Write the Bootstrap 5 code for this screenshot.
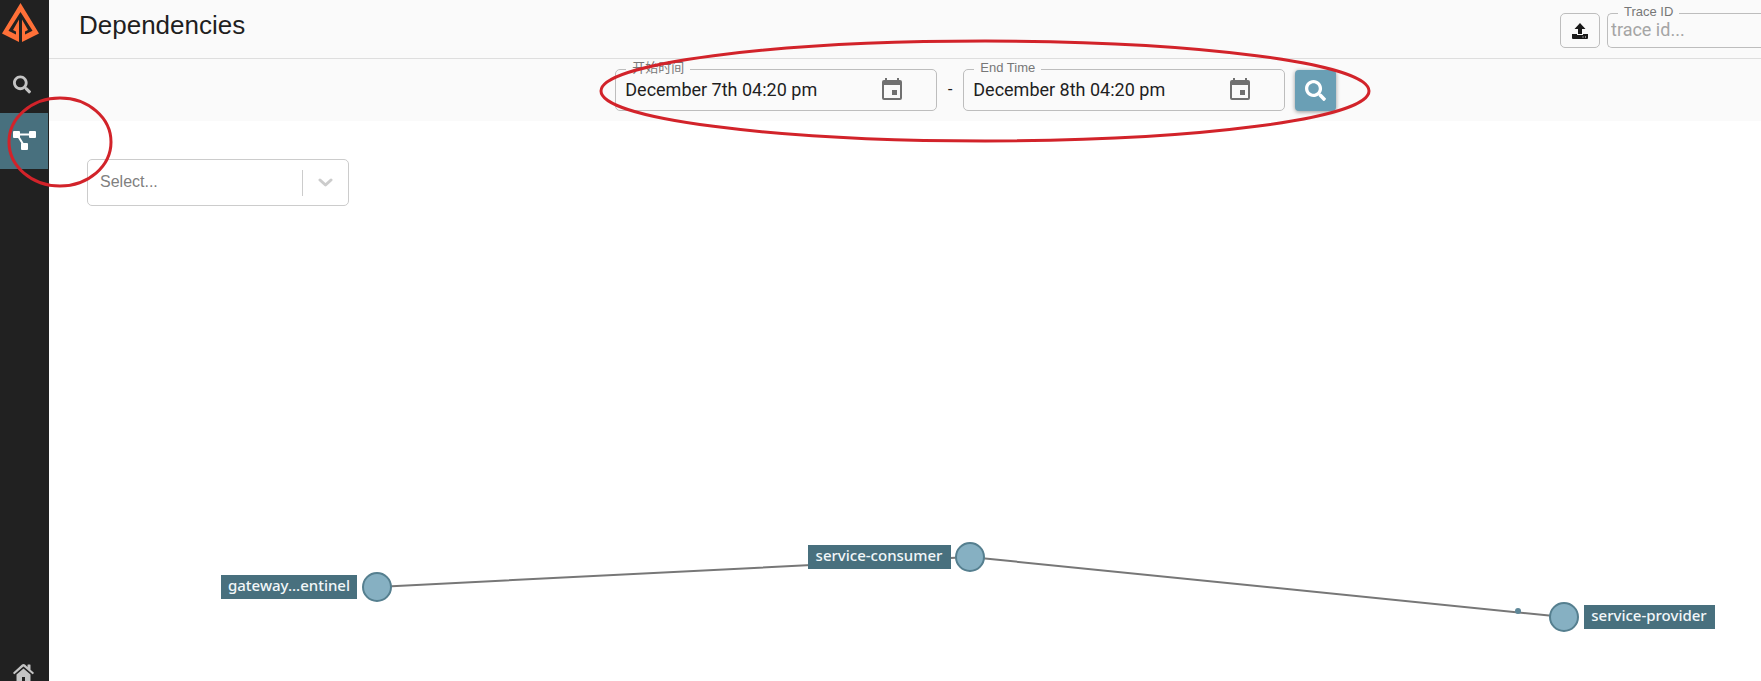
<!DOCTYPE html>
<html lang="en">
<head>
<meta charset="utf-8">
<meta name="viewport" content="width=device-width, initial-scale=1">
<title>Dependencies</title>
<link href="https://cdn.jsdelivr.net/npm/bootstrap@5.3.0/dist/css/bootstrap.min.css" rel="stylesheet">
<style>
  body { font-family: "Liberation Sans", "Noto Sans CJK SC", sans-serif; color: #1f1f1f; background: #fff; }
  .side-rail { width: 49px; background: #212121; }
  .side-rail a { color: #c4c4c4; height: 56px; }
  .side-rail .brand-link { height: 57px; padding: 3px 0 0 2px; }
  .side-rail .icon-link-row { padding: 0 0 2px 13px; }
  .side-rail .current { background: #48707e; color: #fff; margin-right: 1px; }
  .side-rail .home-link { height: 17px; }
  .top-bar { height: 59px; background: #fafafa; border-bottom: 1px solid #dedede; padding-left: 30px; }
  .page-title { font-size: 26px; line-height: 32px; padding-bottom: 8px; }
  .filter-bar { height: 62px; background: #fafafa; padding-top: 10px; }
  .space-start { flex: 4; }
  .space-end { flex: 3; }
  .outlined { border: 1px solid #bdbdbd; border-radius: 5px; }
  .outlined > label { position: absolute; top: -10px; left: 10px; padding: 0 6px; background: #fafafa; color: #777; font-size: 13px; line-height: 16px; white-space: nowrap; }
  .outlined input { font-family: Roboto, "Liberation Sans", sans-serif; font-size: 18px; border: 0; background: transparent; outline: 0; min-width: 0; color: #1f1f1f; }
  .date-box { width: 322px; height: 42px; padding: 0 34px 2px 9px; }
  .date-box input { width: 240px; padding: 0; }
  .date-box button, .search-btn { border: 0; padding: 0; }
  .date-box button { background: transparent; color: #707070; line-height: 0; }
  .dash { width: 26px; font-size: 16px; line-height: 40px; }
  .search-btn { width: 41px; height: 41px; margin: 1px 0 0 10px; border-radius: 4px; background: #6a9fb5; color: #fff; box-shadow: 0 1px 4px rgba(0,0,0,.4); }
  .upload-btn, .trace-box { height: 35px; margin-top: 3px; }
  .upload-btn { width: 40px; background: #fafafa; padding: 0; margin-right: 7px; color: #1a1a1a; }
  .trace-box { width: 154px; border-right: 0; border-radius: 5px 0 0 5px; }
  .trace-box input { width: 100%; padding: 0 0 2px 3px; }
  .trace-box input::placeholder { color: #a5a5a5; opacity: 1; }
  .select-box { width: 262px; height: 47px; margin: 38px 0 0 38px; border: 1px solid #ccc; border-radius: 5px; }
  .select-box select { appearance: none; border: 0; background: transparent; color: #808080; font-size: 16px; padding: 0 12px 2px; width: 100%; height: 43px; outline: 0; }
  .select-end { position: absolute; right: 0; width: 46px; height: 26px; border-left: 1px solid #ccc; pointer-events: none; }
  .overlay-layer { position: absolute; top: 0; left: 0; width: 100%; height: 100%; pointer-events: none; }
  .graph-label { font: 500 15px "Noto Sans", sans-serif; fill: #f2f7f9; text-anchor: middle; }
</style>
</head>
<body>
<div class="d-flex vh-100 overflow-hidden position-relative">
  <nav class="side-rail d-flex flex-column flex-shrink-0" aria-label="Main">
    <a class="brand-link d-block" href="#" aria-label="Home page">
      <svg width="37" height="39" viewBox="0 0 37 39" fill="#ff7038"><path d="M18.500 0 37 30.500 20 39V16.500L26 27l-3 1.500v3l7.500-3.700L18.500 9 6.500 27.800l7.500 3.700v-3L11 27l6-10.500V39L0 30.500z"/></svg>
    </a>
    <a class="icon-link-row d-flex align-items-center" href="#" aria-label="Search">
      <svg width="18" height="19" viewBox="0 0 512 512" fill="currentColor"><path d="M505 442.700 405.300 343c-4.500-4.500-10.600-7-17-7H372c27.600-35.300 44-79.700 44-128C416 93.100 322.900 0 208 0S0 93.100 0 208s93.100 208 208 208c48.300 0 92.700-16.400 128-44v16.300c0 6.400 2.500 12.500 7 17l99.700 99.700c9.400 9.400 24.600 9.400 33.900 0l28.300-28.300c9.400-9.400 9.400-24.600.1-34zM208 336c-70.700 0-128-57.200-128-128 0-70.700 57.200-128 128-128 70.700 0 128 57.200 128 128 0 70.700-57.200 128-128 128z"/></svg>
    </a>
    <a class="icon-link-row current d-flex align-items-center" href="#" aria-label="Dependencies" aria-current="page">
      <svg width="23" height="19" viewBox="0 0 23 19" fill="currentColor"><path d="M5 3.500h13M5 5l5 8" stroke="currentColor" stroke-width="2"/><rect width="7" height="7" rx="1"/><rect x="16" width="7" height="7" rx="1"/><rect x="8" y="12" width="7" height="7" rx="1"/></svg>
    </a>
    <a class="icon-link-row home-link mt-auto d-flex align-items-start overflow-hidden" href="#" aria-label="Zipkin home">
      <svg class="flex-shrink-0" width="21" height="19" viewBox="0 0 21 19" fill="currentColor"><path d="M10.500 4.500 3.500 10.500V18q0 1 1 1H9v-6h3v6h4.500q1 0 1-1v-7.500z"/><path d="M10.500 0q-.8 0-1.500.6L.3 8.500q-.3.400 0 .8l.6.700q.4.300.8 0l8.800-7.600 8.800 7.600q.4.300.8 0l.6-.7q.3-.4 0-.8L17.500 5.800V1q0-.5-.5-.5h-2q-.5 0-.5.500v2L12 .6Q11.300 0 10.500 0z"/></svg>
    </a>
  </nav>

  <main class="flex-grow-1 d-flex flex-column overflow-hidden">
    <header class="top-bar d-flex align-items-center flex-shrink-0">
      <h1 class="page-title fw-normal m-0">Dependencies</h1>
      <button class="upload-btn outlined ms-auto" type="button" aria-label="Upload JSON">
        <svg width="16" height="16" viewBox="0 0 16 16" fill="currentColor"><path d="M8 0 13.500 6H10v5H6V6H2.500zM0 11h5v1h6v-1h5v4q0 1-1 1H1q-1 0-1-1z"/><path fill="#fafafa" d="M10.500 13.500h1v1h-1zM13 13.500h1v1h-1z"/></svg>
      </button>
      <div class="trace-box outlined position-relative d-flex align-items-center">
        <label for="trace">Trace ID</label>
        <input id="trace" type="text" placeholder="trace id...">
      </div>
    </header>

    <form class="filter-bar d-flex align-items-start flex-shrink-0">
      <div class="space-start"></div>
      <div class="date-box outlined position-relative d-flex align-items-center justify-content-between">
        <label for="start" lang="zh">开始时间</label>
        <input id="start" type="text" value="December 7th 04:20 pm">
        <button type="button" aria-label="Pick start time"><svg width="20" height="22" viewBox="0 0 20 22" fill="currentColor"><path fill-rule="evenodd" d="M3 0h2v2h10V0h2v2h1q2 0 2 2v16q0 2-2 2H2q-2 0-2-2V4q0-2 2-2h1zM2 7v13h16V7z"/><path d="M10 12h5v5h-5z"/></svg></button>
      </div>
      <div class="dash text-center">-</div>
      <div class="date-box outlined position-relative d-flex align-items-center justify-content-between">
        <label for="end">End Time</label>
        <input id="end" type="text" value="December 8th 04:20 pm">
        <button type="button" aria-label="Pick end time"><svg width="20" height="22" viewBox="0 0 20 22" fill="currentColor"><path fill-rule="evenodd" d="M3 0h2v2h10V0h2v2h1q2 0 2 2v16q0 2-2 2H2q-2 0-2-2V4q0-2 2-2h1zM2 7v13h16V7z"/><path d="M10 12h5v5h-5z"/></svg></button>
      </div>
      <button class="search-btn d-flex align-items-center justify-content-center" type="button" aria-label="Find dependencies">
        <svg width="21" height="21" viewBox="0 0 512 512" fill="currentColor"><path d="M505 442.700 405.300 343c-4.500-4.500-10.600-7-17-7H372c27.600-35.300 44-79.700 44-128C416 93.100 322.900 0 208 0S0 93.100 0 208s93.100 208 208 208c48.300 0 92.700-16.400 128-44v16.300c0 6.400 2.500 12.500 7 17l99.700 99.700c9.400 9.400 24.600 9.400 33.900 0l28.300-28.300c9.400-9.400 9.400-24.600.1-34zM208 336c-70.700 0-128-57.200-128-128 0-70.700 57.200-128 128-128 70.700 0 128 57.200 128 128 0 70.700-57.200 128-128 128z"/></svg>
      </button>
      <div class="space-end"></div>
    </form>

    <div class="select-box position-relative d-flex align-items-center flex-shrink-0">
      <select aria-label="Filter services"><option>Select...</option></select>
      <span class="select-end d-flex align-items-center justify-content-center">
        <svg width="15" height="9" viewBox="0 0 15 9" fill="none" stroke="#ccc" stroke-width="3" stroke-linecap="round" stroke-linejoin="round"><path d="m2 2 5.500 5L13 2"/></svg>
      </span>
    </div>
  </main>

  <!-- Service graph -->
  <svg class="overlay-layer" role="img" aria-label="Service dependency graph">
    <path d="M377 587 970 557 1564 617" fill="none" stroke="#777" stroke-width="2"/>
    <circle cx="1518" cy="611" r="3" fill="#5e8798"/>
    <g fill="#86b0c2" stroke="#557f8f" stroke-width="2">
      <circle cx="377" cy="587" r="14"/><circle cx="970" cy="557" r="14"/><circle cx="1564" cy="617" r="14"/>
    </g>
    <g fill="#48707e"><rect x="221" y="575" width="136" height="24"/><rect x="808" y="545" width="143" height="24"/><rect x="1584" y="605" width="131" height="24"/></g>
    <g class="graph-label"><text x="289" y="591">gateway...entinel</text><text x="879" y="561">service-consumer</text><text x="1649" y="621">service-provider</text></g>
  </svg>

  <!-- Hand-drawn highlights -->
  <svg class="overlay-layer" fill="none" stroke="#d2232a" stroke-width="3" aria-hidden="true">
    <ellipse cx="60" cy="142" rx="51" ry="44"/>
    <ellipse cx="985" cy="91" rx="384" ry="50"/>
  </svg>
</div>
<script src="https://cdn.jsdelivr.net/npm/bootstrap@5.3.0/dist/js/bootstrap.bundle.min.js"></script>
</body>
</html>
